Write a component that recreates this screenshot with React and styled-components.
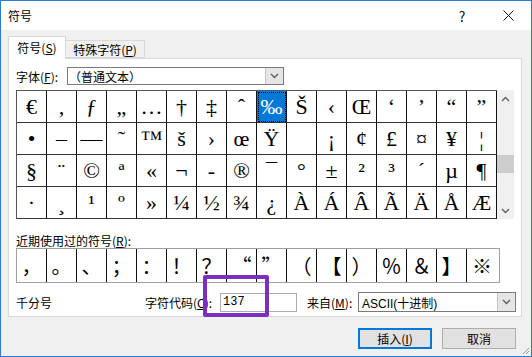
import React from 'react'
import styled, { createGlobalStyle } from 'styled-components'

const GlobalStyle = createGlobalStyle`
  html, body { margin: 0; padding: 0; background: #fff; }
  body {
    font-family: "Noto Sans CJK SC", "Liberation Sans", sans-serif;
    font-size: 12px;
    color: #000;
  }
`

const symbols = [
  '€', '‚', 'ƒ', '„', '…', '†', '‡', 'ˆ', '‰', 'Š', '‹', 'Œ', '‘', '’', '“', '”',
  '•', '–', '—', '˜', '™', 'š', '›', 'œ', 'Ÿ', '\u00a0', '¡', '¢', '£', '¤', '¥', '¦',
  '§', '¨', '©', 'ª', '«', '¬', '-', '®', '¯', '°', '±', '²', '³', '´', 'µ', '¶',
  '·', '¸', '¹', 'º', '»', '¼', '½', '¾', '¿', 'À', 'Á', 'Â', 'Ã', 'Ä', 'Å', 'Æ',
]

const recent = ['，', '。', '、', '；', '：', '！', '？', '“', '”', '（', '【', '）', '％', '＆', '】', '※']

const Win = styled.div`
  position: relative;
  width: 532px;
  height: 357px;
  box-sizing: border-box;
  border: 1px solid #2b7bd3;
  background: #f0f0f0;
  display: flex;
  flex-direction: column;
  overflow: hidden;
`

const TitleBar = styled.div`
  height: 29px;
  background: #fff;
  display: flex;
  align-items: center;
  padding-left: 7px;
  font-size: 12px;
`

const TitleBtn = styled.div`
  width: 46px;
  height: 29px;
  display: flex;
  align-items: center;
  justify-content: center;
  font-size: 14px;
  color: #111;
  margin-left: ${p => (p.$first ? 'auto' : '0')};
`

const Body = styled.div`
  padding: 6px 8px 0 7px;
`

const TabBar = styled.div`
  display: flex;
  align-items: flex-end;
  height: 22px;
`

const Tab = styled.div`
  box-sizing: border-box;
  width: ${p => p.$w}px;
  height: ${p => (p.$active ? 23 : 18)}px;
  margin-bottom: ${p => (p.$active ? -1 : 0)}px;
  position: relative;
  z-index: ${p => (p.$active ? 1 : 0)};
  background: ${p => (p.$active ? '#fff' : '#f0f0f0')};
  border: 1px solid #d9d9d9;
  border-bottom: ${p => (p.$active ? 'none' : '1px solid #d9d9d9')};
  border-left: ${p => (p.$active ? '1px solid #d9d9d9' : 'none')};
  display: flex;
  align-items: center;
  justify-content: center;
  font-size: 12px;
  padding-bottom: ${p => (p.$active ? 2 : 0)}px;
`

const Panel = styled.div`
  width: 514px;
  box-sizing: border-box;
  background: #fff;
  border: 1px solid #d9d9d9;
  padding: 8px 0 4px 7px;
`

const Row = styled.div`
  display: flex;
  align-items: center;
  height: ${p => p.$h}px;
  margin-top: ${p => p.$mt || 0}px;
`

const Label = styled.div`
  width: ${p => (p.$w ? `${p.$w}px` : 'auto')};
  font-size: 12px;
  white-space: nowrap;
`

const Combo = styled.div`
  box-sizing: border-box;
  width: ${p => p.$w}px;
  height: ${p => p.$h}px;
  border: 1px solid #7a7a7a;
  background: #fff;
  display: flex;
  align-items: center;
  font-size: 12px;
`

const ComboText = styled.div`
  flex: 1;
  padding-left: ${p => p.$pl || 1}px;
  font-family: ${p => (p.$ascii ? '"Liberation Sans", "Noto Sans CJK SC", sans-serif' : 'inherit')};
  white-space: nowrap;
`

const ComboBtn = styled.div`
  width: 17px;
  height: 100%;
  background: #e5e5e5;
  border-left: 1px solid #c4c4c4;
  display: flex;
  align-items: center;
  justify-content: center;
`

const GridWrap = styled.div`
  display: flex;
  margin-top: 5px;
`

const Grid = styled.div`
  display: grid;
  grid-template-columns: repeat(16, 30px);
  grid-template-rows: repeat(4, 32px);
  border-top: 1px solid #555;
  border-left: 1px solid #555;
`

const Cell = styled.div`
  box-sizing: border-box;
  border-right: 1px solid #111;
  border-bottom: 1px solid #333;
  display: flex;
  align-items: center;
  justify-content: center;
  font-family: "Liberation Serif", "DejaVu Serif", serif;
  font-size: 22px;
  line-height: 1;
  background: ${p => (p.$sel ? '#0078d7' : '#fff')};
  color: ${p => (p.$sel ? '#fff' : '#000')};
  outline: ${p => (p.$sel ? '1px dotted #000' : 'none')};
  outline-offset: -2px;
`

const ScrollBar = styled.div`
  width: 17px;
  height: 129px;
  background: #f0f0f0;
  display: flex;
  flex-direction: column;
`

const ScrollArrow = styled.div`
  height: 17px;
  display: flex;
  align-items: center;
  justify-content: center;
`

const Thumb = styled.div`
  margin-top: 48px;
  height: 18px;
  background: #cdcdcd;
`

const RecentLabel = styled.div`
  margin-top: 14px;
  height: 15px;
  line-height: 15px;
  font-size: 12px;
`

const RecentRow = styled.div`
  display: flex;
  width: 484px;
  height: 35px;
  box-sizing: border-box;
  border: 1px solid #a0a0a0;
`

const RecentCell = styled.div`
  width: 30px;
  box-sizing: border-box;
  border-right: ${p => (p.$last ? 'none' : '1px solid #111')};
  display: flex;
  align-items: center;
  justify-content: center;
  font-family: "Noto Sans CJK SC", sans-serif;
  font-size: 20px;
`

const CodeInput = styled.div`
  box-sizing: border-box;
  width: 77px;
  height: 19px;
  border: 1px solid #adadad;
  background: #fff;
  display: flex;
  align-items: center;
  padding-left: 2px;
  font-family: "Liberation Mono", monospace;
  font-size: 12px;
  margin-right: 10px;
`

const Buttons = styled.div`
  display: flex;
  justify-content: flex-end;
  gap: 10px;
  margin-top: 11px;
  padding-right: 7px;
`

const Button = styled.div`
  box-sizing: border-box;
  width: 74px;
  height: 21px;
  background: #e1e1e1;
  border: ${p => (p.$default ? '2px solid #0078d7' : '1px solid #adadad')};
  display: flex;
  align-items: center;
  justify-content: center;
  font-size: 12px;
`

const Highlight = styled.div`
  position: absolute;
  left: 202px;
  top: 274px;
  width: 66px;
  height: 42px;
  box-sizing: border-box;
  border: 4px solid #7b2fbf;
  border-radius: 2px;
`

const Grip = styled.svg`
  position: absolute;
  right: 1px;
  bottom: 1px;
`

const Chevron = ({ up }) => (
  <svg width="9" height="6" viewBox="0 0 9 6">
    <path d={up ? 'M1 5 L4.5 1.5 L8 5' : 'M1 1 L4.5 4.5 L8 1'} fill="none" stroke="#606060" strokeWidth="1.4" />
  </svg>
)

const Acc = ({ k }) => (
  <>(<u>{k}</u>)</>
)

export default function App() {
  return (
    <>
      <GlobalStyle />
      <Win>
        <TitleBar>
          符号
          <TitleBtn $first>?</TitleBtn>
          <TitleBtn>
            <svg width="11" height="11" viewBox="0 0 11 11">
              <path d="M0.5 0.5 L10.5 10.5 M10.5 0.5 L0.5 10.5" stroke="#111" strokeWidth="1" />
            </svg>
          </TitleBtn>
        </TitleBar>
        <Body>
          <TabBar>
            <Tab $active $w={58}>符号<Acc k="S" /></Tab>
            <Tab $w={79}>特殊字符<Acc k="P" /></Tab>
          </TabBar>
          <Panel>
            <Row $h={18}>
              <Label $w={51}>字体<Acc k="F" />:</Label>
              <Combo $w={217} $h={18}>
                <ComboText>（普通文本）</ComboText>
                <ComboBtn><Chevron /></ComboBtn>
              </Combo>
            </Row>
            <GridWrap>
              <Grid>
                {symbols.map((s, i) => (
                  <Cell key={i} $sel={i === 8}>{s}</Cell>
                ))}
              </Grid>
              <ScrollBar>
                <ScrollArrow><Chevron up /></ScrollArrow>
                <Thumb />
                <div style={{ flex: 1 }} />
                <ScrollArrow><Chevron /></ScrollArrow>
              </ScrollBar>
            </GridWrap>
            <RecentLabel>近期使用过的符号<Acc k="R" />:</RecentLabel>
            <RecentRow>
              {recent.map((s, i) => (
                <RecentCell key={i} $last={i === recent.length - 1}>{s}</RecentCell>
              ))}
            </RecentRow>
            <Row $h={20} $mt={9}>
              <Label $w={129}>千分号</Label>
              <Label $w={75}>字符代码<Acc k="C" />:</Label>
              <CodeInput>137</CodeInput>
              <Label $w={51}>来自<Acc k="M" />:</Label>
              <Combo $w={158} $h={20}>
                <ComboText $ascii $pl={3}>ASCII(十进制)</ComboText>
                <ComboBtn><Chevron /></ComboBtn>
              </Combo>
            </Row>
          </Panel>
          <Buttons>
            <Button $default>插入<Acc k="I" /></Button>
            <Button>取消</Button>
          </Buttons>
        </Body>
        <Highlight />
        <Grip width="10" height="10" viewBox="0 0 10 10">
          <path d="M9 3 L3 9 M9 6 L6 9" stroke="#9a9a9a" strokeWidth="1" />
        </Grip>
      </Win>
    </>
  )
}
